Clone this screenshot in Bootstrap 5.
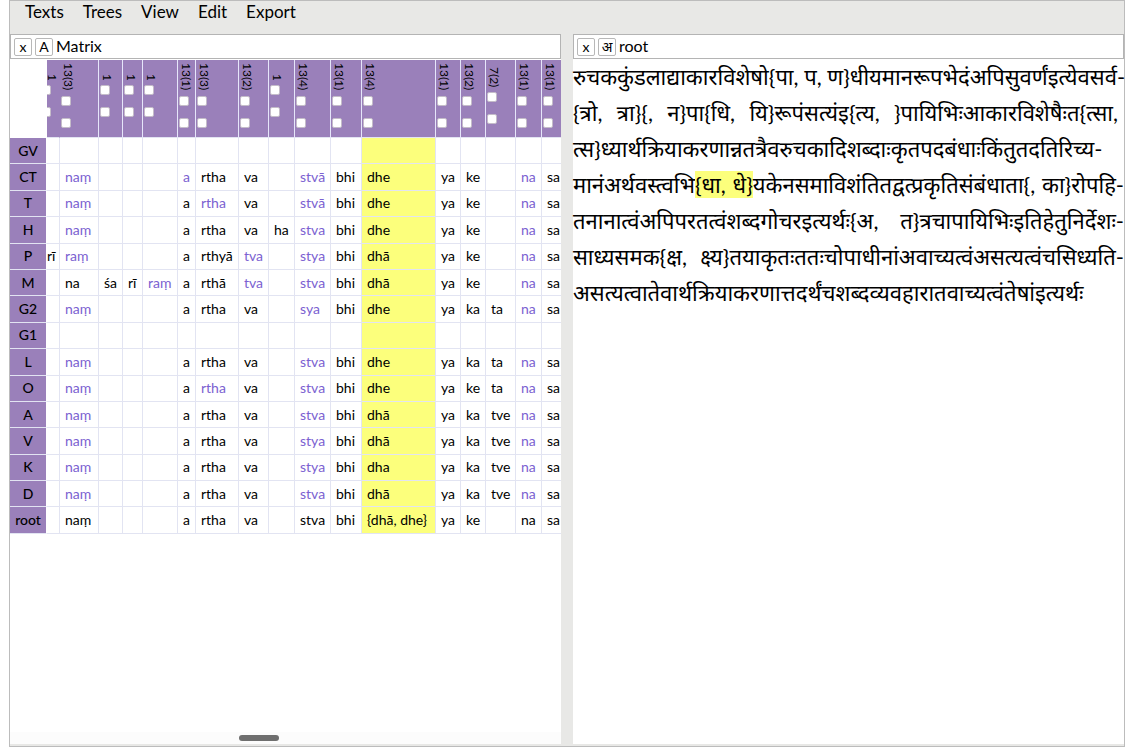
<!DOCTYPE html>
<html lang="en">
<head>
<meta charset="utf-8">
<meta name="viewport" content="width=device-width, initial-scale=1">
<title>Matrix editor</title>
<link href="https://cdn.jsdelivr.net/npm/bootstrap@5.3.0/dist/css/bootstrap.min.css" rel="stylesheet">
<style>
body{font-family:Lato,"Noto Sans","Noto Sans Devanagari","Lohit Devanagari",sans-serif;color:#000;padding:0 9px 9px}
.app-frame{height:calc(100vh - 9px);background:#e8e8e6;border:1px solid #bcbcbc;padding-bottom:2px}
.menu-bar{height:33px;padding-left:15px;gap:19px}
.menu-bar a{color:#000;text-decoration:none;font-size:17px;line-height:22px}
.panes{gap:12px;min-height:0}
.pane{min-width:0;flex:1 1 0;background:#fff}
.pane-title{height:25px;border:1px solid #b4b4b4;padding-left:3px;gap:3px;font-size:16px;line-height:22px}
.pane-title span{padding-bottom:2px}
.tool{width:18px;height:18px;padding:0;border:1px solid #b8b8b8;border-radius:2px;background:#fff;color:#000;font-size:14px;line-height:15px}
.grid-view{overflow:hidden;padding-top:1px}
.matrix{table-layout:fixed;border-collapse:separate;border-spacing:0;height:474px;font-size:14px;line-height:18px}
.matrix th,.matrix td{padding:0 0 0 5px;white-space:nowrap;border-right:1px solid #e2e4f2;border-bottom:1px solid #e2e4f2;vertical-align:middle;overflow:hidden}
.matrix thead th{height:78px;background:#9a80ba;padding:0 0 0 1px;font-weight:400;border-right-color:#e6e6fa}
.matrix thead th.corner{background:#fff;border-color:#fff}
.matrix thead th.joined{border-right-color:#9a80ba;padding-left:0}
.matrix tbody th{background:#9a80ba;padding:0;text-align:center;font-weight:500;border-right-color:#fff}
.matrix td.alt{color:#7b61d1}
.matrix td.lit{background:#fcff7c}
.matrix .cut{text-align:right;padding-left:0}
.matrix td.cut{padding-right:5px}
.count{writing-mode:vertical-rl;font-size:12px;line-height:14px;margin-bottom:5px}
.cut .count{line-height:10px}
.tick{appearance:none;width:10px;height:10px;margin:0 0 12px;border:1px solid #c4bcc9;border-radius:2px;background:#fff;display:block;flex:none}
.tick:last-child{margin-bottom:6px}
.tick:checked{background:#7b61d1}
.cut .tick{margin-left:-6px}
.scroll-track{height:12px;background:#fcfcfc;padding:3px 0 0 229px}
.scroll-thumb{width:40px;height:6px;border-radius:3px;background:#6f6f6f}
.edition{font-size:22px;line-height:36px;margin:0}
.edition span{display:block;white-space:nowrap;text-align-last:justify}
.edition .loose{text-align-last:left}
.edition .inset{padding-right:6px}
.edition mark{padding:0;background:#fcff7c;color:#000}
</style>
</head>
<body>
<div class="app-frame d-flex flex-column">
  <nav class="menu-bar d-flex align-items-start" aria-label="Main">
    <a href="#">Texts</a><a href="#">Trees</a><a href="#">View</a><a href="#">Edit</a><a href="#">Export</a>
  </nav>
  <main class="panes d-flex flex-grow-1">
    <section class="pane d-flex flex-column">
      <header class="pane-title d-flex align-items-center"><button class="tool" type="button">x</button><button class="tool" type="button">A</button><span>Matrix</span></header>
      <div class="grid-view flex-grow-1"><table class="matrix" id="matrix"></table></div>
      <div class="scroll-track"><div class="scroll-thumb"></div></div>
    </section>
    <section class="pane d-flex flex-column">
      <header class="pane-title d-flex align-items-center"><button class="tool" type="button">x</button><button class="tool" type="button">अ</button><span>root</span></header>
      <p class="edition" lang="sa"><span>रुचककुंडलाद्याकारविशेषो{पा, प, ण}धीयमानरूपभेदंअपिसुवर्णंइत्येवसर्व-</span>
<span class="inset">{त्रो, त्रा}{, न}पा{धि, यि}रूपंसत्यंइ{त्य,&nbsp;}पायिभिःआकारविशेषैःत{त्सा,</span>
<span class="loose">त्स}ध्यार्थक्रियाकरणान्नतत्रैवरुचकादिशब्दाःकृतपदबंधाःकिंतुतदतिरिच्य-</span>
<span>मानंअर्थवस्त्वभि<mark>{धा, धे}</mark>यकेनसमाविशंतितद्वत्प्रकृतिसंबंधाता{, का}रोपहि-</span>
<span>तनानात्वंअपिपरतत्वंशब्दगोचरइत्यर्थः{अ, त}त्रचापायिभिःइतिहेतुनिर्देशः-</span>
<span>साध्यसमक{क्ष, क्ष्य}तयाकृतःततःचोपाधीनांअवाच्यत्वंअसत्यत्वंचसिध्यति-</span>
<span class="loose">असत्यत्वातेवार्थक्रियाकरणात्तदर्थंचशब्दव्यवहारातवाच्यत्वंतेषांइत्यर्थः</span></p>
    </section>
  </main>
</div>
<script>
// Column widths and variant counts, then one line per witness; "*" marks a differing reading.
const widths=[37,13,39,24,20,35,18,43,30,26,36,31,74,25,25,30,26,26];
const counts=['1','13(3)','1','1','1','13(1)','13(3)','13(2)','1','13(4)','13(1)','13(4)','13(1)','13(2)','7(2)','13(1)','13(1)'];
const rows=`GV||||||||||||||||
CT||*naṃ||||*a|rtha|va||*stvā|bhi|dhe|ya|ke||*na|sa
T||*naṃ||||a|*rtha|va||*stvā|bhi|dhe|ya|ke||*na|sa
H||*naṃ||||a|rtha|va|ha|*stva|bhi|dhe|ya|ke||*na|sa
P|rī|*raṃ||||a|rthyā|*tva||*stya|bhi|dhā|ya|ke||*na|sa
M||na|śa|rī|*raṃ|a|rthā|*tva||*stva|bhi|dhā|ya|ke||*na|sa
G2||*naṃ||||a|rtha|va||*sya|bhi|dhe|ya|ka|ta|*na|sa
G1||||||||||||||||
L||*naṃ||||a|rtha|va||*stva|bhi|dhe|ya|ka|ta|*na|sa
O||*naṃ||||a|*rtha|va||*stva|bhi|dhe|ya|ke|ta|*na|sa
A||*naṃ||||a|rtha|va||*stva|bhi|dhā|ya|ka|tve|*na|sa
V||*naṃ||||a|rtha|va||*stya|bhi|dhā|ya|ka|tve|*na|sa
K||*naṃ||||a|rtha|va||*stya|bhi|dha|ya|ka|tve|*na|sa
D||*naṃ||||a|rtha|va||*stva|bhi|dhā|ya|ka|tve|*na|sa
root||naṃ||||a|rtha|va||stva|bhi|{dhā, dhe}|ya|ke||na|sa`.split('\n').map(r=>r.split('|'));
const table=document.getElementById('matrix');
table.style.width=widths.reduce((a,b)=>a+b)+'px';
table.innerHTML='<colgroup>'+widths.map(w=>`<col style="width:${w}px">`).join('')+'</colgroup><thead><tr><th class="corner"></th>'+
counts.map((c,i)=>`<th class="${i?'':'cut joined'}"><div class="d-flex flex-column align-items-start"><span class="count">${c}</span><input class="tick" type="checkbox" aria-label="Column ${i+1}, normalize"><input class="tick" type="checkbox" aria-label="Column ${i+1}, group"></div></th>`).join('')+
'</tr></thead><tbody>'+rows.map(r=>{while(r.length<18)r.push('');return `<tr><th scope="row">${r[0]}</th>`+r.slice(1).map((t,i)=>`<td class="${t[0]=='*'?'alt ':''}${i==0?'cut ':''}${i==11?'lit':''}">${t.replace('*','')}</td>`).join('')+'</tr>'}).join('')+'</tbody>';
</script>
<script src="https://cdn.jsdelivr.net/npm/bootstrap@5.3.0/dist/js/bootstrap.bundle.min.js"></script>
</body>
</html>
